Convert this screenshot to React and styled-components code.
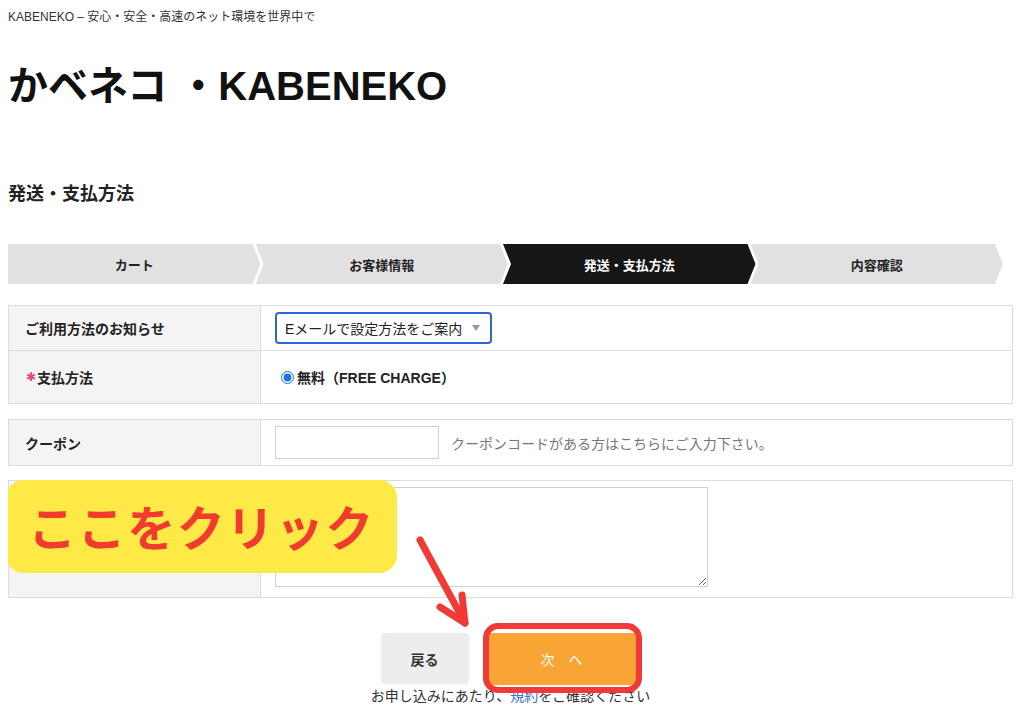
import styled, { createGlobalStyle } from "styled-components";

const GlobalStyle = createGlobalStyle`
  body {
    margin: 8px;
    background: #fff;
    font-family: "Liberation Sans", "Noto Sans CJK JP", sans-serif;
    color: #222;
  }
`;

const Page = styled.div`
  position: relative;
  width: 1005px;
`;

const Tagline = styled.div`
  font-size: 12px;
  line-height: 18px;
  color: #333;
`;

const SiteTitle = styled.h1`
  margin: 36px 0 0;
  font-size: 40px;
  line-height: 49px;
  font-weight: 700;
  color: #111;
`;

const SectionTitle = styled.h2`
  margin: 70px 0 0;
  font-size: 18px;
  line-height: 26px;
  font-weight: 700;
  color: #222;
`;

const StepBar = styled.div`
  display: flex;
  width: 995px;
  margin-top: 37px;
`;

const Step = styled.div`
  flex: 1;
  height: 40px;
  display: flex;
  align-items: center;
  justify-content: center;
  font-size: 13px;
  font-weight: 700;
  color: ${(props) => (props.active ? "#fff" : "#222")};
  background: ${(props) => (props.active ? "#161616" : "#e1e1e1")};
  clip-path: ${(props) =>
    props.first
      ? "polygon(0 0, calc(100% - 8px) 0, 100% 50%, calc(100% - 8px) 100%, 0 100%)"
      : "polygon(0 0, calc(100% - 8px) 0, 100% 50%, calc(100% - 8px) 100%, 0 100%, 8px 50%)"};
  ${(props) => !props.first && "margin-left: -5px;"}
`;

const FormTable = styled.div`
  margin-top: ${(props) => props.mt}px;
  border: 1px solid #dcdcdc;
`;

const Row = styled.div`
  display: grid;
  grid-template-columns: 252px 1fr;
  min-height: ${(props) => props.h}px;

  & + & {
    border-top: 1px solid #dcdcdc;
  }
`;

const Label = styled.div`
  box-sizing: border-box;
  background: #f4f4f4;
  border-right: 1px solid #dcdcdc;
  padding: 0 16px;
  display: flex;
  align-items: center;
  font-size: 14px;
  font-weight: 700;
  color: #222;
`;

const Required = styled.span`
  display: inline-block;
  font-family: "DejaVu Sans", sans-serif;
  color: #e8466a;
  font-size: 12px;
  font-weight: 400;
  line-height: 1;
  margin: 0 1px 0 1px;
`;

const Value = styled.div`
  display: flex;
  align-items: ${(props) => (props.top ? "flex-start" : "center")};
  padding: ${(props) => (props.top ? "6px 14px 0" : "0 14px")};
  gap: 12px;
`;

const SelectBox = styled.div`
  box-sizing: border-box;
  width: 217px;
  height: 32px;
  border: 2px solid #2a68d6;
  border-radius: 4px;
  display: flex;
  align-items: center;
  justify-content: space-between;
  padding: 0 10px 0 8px;
  font-size: 14px;
  color: #222;
`;

const Caret = styled.span`
  width: 0;
  height: 0;
  border-left: 4px solid transparent;
  border-right: 4px solid transparent;
  border-top: 6px solid #999;
`;

const RadioLabel = styled.label`
  display: flex;
  align-items: center;
  font-size: 14px;
  font-weight: 700;
  color: #222;
`;

const Radio = styled.input`
  width: 13px;
  height: 13px;
  margin: 0 3px 0 6px;
  accent-color: #1a73e8;
`;

const TextInput = styled.input`
  box-sizing: border-box;
  width: 164px;
  height: 33px;
  border: 1px solid #cfcfcf;
  border-radius: 0;
  margin: 0;
`;

const Hint = styled.span`
  font-size: 14px;
  color: #777;
`;

const TextArea = styled.textarea`
  box-sizing: border-box;
  width: 433px;
  height: 100px;
  border: 1px solid #cfcfcf;
  border-radius: 0;
  margin: 0;
`;

const Actions = styled.div`
  display: flex;
  justify-content: center;
  gap: 18px;
  margin-left: -4px;
  margin-top: 35px;
`;

const BackButton = styled.button`
  width: 88px;
  height: 51px;
  border: none;
  border-radius: 4px;
  background: #ededed;
  font-family: inherit;
  font-size: 14px;
  font-weight: 700;
  color: #333;
`;

const NextWrap = styled.div`
  position: relative;
`;

const NextButton = styled.button`
  width: 150px;
  height: 52px;
  border: none;
  border-radius: 4px;
  background: #f9a535;
  font-family: inherit;
  font-size: 14px;
  color: #fff;
`;

const Highlight = styled.div`
  position: absolute;
  left: -4px;
  top: -10px;
  width: 159px;
  height: 70px;
  box-sizing: border-box;
  border: 6px solid #f2393a;
  border-radius: 15px;
  z-index: 2;
  pointer-events: none;
`;

const Notice = styled.p`
  margin: 2px 0 0;
  text-align: center;
  font-size: 14px;
  line-height: 18px;
  color: #333;

  a {
    color: #3a6fd8;
    text-decoration: none;
  }
`;

const Callout = styled.div`
  position: absolute;
  left: -2px;
  top: 472px;
  width: 391px;
  height: 93px;
  padding-bottom: 4px;
  box-sizing: border-box;
  background: #fee946;
  border-radius: 18px;
  display: flex;
  align-items: center;
  justify-content: center;
  color: #f23b2f;
  font-family: "Noto Sans CJK JP", sans-serif;
  font-size: 48px;
  font-weight: 700;
  letter-spacing: 1.5px;
  z-index: 3;
`;

const Arrow = styled.svg`
  position: absolute;
  left: 392px;
  top: 517px;
  z-index: 3;
`;

const steps = ["カート", "お客様情報", "発送・支払方法", "内容確認"];

const App = () => {
  return (
    <>
      <GlobalStyle />
      <Page>
        <Tagline>KABENEKO – 安心・安全・高速のネット環境を世界中で</Tagline>
        <SiteTitle>かベネコ ・KABENEKO</SiteTitle>
        <SectionTitle>発送・支払方法</SectionTitle>

        <StepBar>
          {steps.map((s, i) => (
            <Step key={s} first={i === 0} active={i === 2}>
              {s}
            </Step>
          ))}
        </StepBar>

        <FormTable mt={21}>
          <Row h={44}>
            <Label>ご利用方法のお知らせ</Label>
            <Value>
              <SelectBox>
                Eメールで設定方法をご案内
                <Caret />
              </SelectBox>
            </Value>
          </Row>
          <Row h={52}>
            <Label>
              <Required>✱</Required>支払方法
            </Label>
            <Value>
              <RadioLabel>
                <Radio type="radio" defaultChecked name="pay" />
                無料（FREE CHARGE）
              </RadioLabel>
            </Value>
          </Row>
        </FormTable>

        <FormTable mt={15}>
          <Row h={45}>
            <Label>クーポン</Label>
            <Value>
              <TextInput type="text" />
              <Hint>クーポンコードがある方はこちらにご入力下さい。</Hint>
            </Value>
          </Row>
        </FormTable>

        <FormTable mt={14}>
          <Row h={116}>
            <Label />
            <Value top>
              <TextArea />
            </Value>
          </Row>
        </FormTable>

        <Actions>
          <BackButton>戻る</BackButton>
          <NextWrap>
            <NextButton>次　へ</NextButton>
            <Highlight />
          </NextWrap>
        </Actions>
        <Notice>
          お申し込みにあたり、<a href="#">規約</a>をご確認ください
        </Notice>

        <Callout>ここをクリック</Callout>
        <Arrow width="80" height="110" viewBox="0 0 80 110">
          <g
            fill="none"
            stroke="#f03a36"
            strokeWidth="7"
            strokeLinecap="round"
            strokeLinejoin="round"
          >
            <path d="M20 15 L65 98" />
            <path d="M40 82 L65 98 L62 70" />
          </g>
        </Arrow>
      </Page>
    </>
  );
};

export default App;
